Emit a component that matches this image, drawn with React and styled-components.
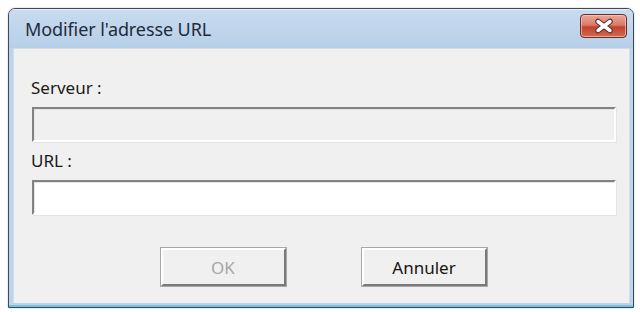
import React from "react";
import styled, { createGlobalStyle } from "styled-components";

const GlobalStyle = createGlobalStyle`
  html, body {
    margin: 0;
    padding: 0;
    background: #ffffff;
  }
  body {
    font-family: "Noto Sans", "Open Sans", sans-serif;
  }
`;

const Page = styled.div`
  width: 640px;
  height: 312px;
  padding: 8px 0 0 8px;
  box-sizing: border-box;
`;

const Window = styled.div`
  width: 626px;
  height: 300px;
  box-sizing: border-box;
  border: 1px solid #3c4a58;
  border-radius: 7px 7px 0 0;
  background: linear-gradient(#c3d7ec, #b9d1ea 40px);
  display: flex;
  flex-direction: column;
  overflow: hidden;
  box-shadow: 0 0 2px rgba(0, 0, 0, 0.25);
`;

const TitleBar = styled.div`
  height: 38px;
  flex: none;
  display: flex;
  align-items: center;
  justify-content: space-between;
  padding: 0 6px 0 16px;
  background: linear-gradient(#c8dbef, #b6cfe8);
  border-top: 1px solid #e8f0f8;
`;

const Title = styled.div`
  font-size: 18px;
  color: #1e2b3a;
  letter-spacing: -0.1px;
`;

const CloseButton = styled.div`
  align-self: flex-start;
  margin-top: 4px;
  width: 47px;
  height: 24px;
  box-sizing: border-box;
  border: 1px solid #6a2d24;
  border-radius: 4px;
  background: linear-gradient(#eaa896 0%, #da7b6c 45%, #c4412f 55%, #d26a4f 100%);
  box-shadow: inset 0 0 0 1px rgba(255, 210, 200, 0.6);
  display: flex;
  align-items: center;
  justify-content: center;
`;

const Frame = styled.div`
  flex: 1;
  display: flex;
  padding: 0 4px 4px 4px;
  background: #bcd3eb;
  box-shadow: inset 0 -2px 0 #6fc5e8;
`;

const Content = styled.div`
  flex: 1;
  background: #f0f0f0;
  border: 1px solid #d4dde6;
  border-bottom: none;
  padding: 29px 13px 0 17px;
  display: flex;
  flex-direction: column;
`;

const Label = styled.div`
  font-size: 17px;
  line-height: 20px;
  color: #1a1a1a;
  margin-top: ${(p) => p.$top || 0}px;
`;

const Field = styled.input`
  display: block;
  width: 584px;
  height: 35px;
  box-sizing: border-box;
  margin-top: 9px;
  margin-left: 1px;
  border: 2px solid;
  border-color: #828282 #ffffff #ffffff #828282;
  box-shadow: 1px 1px 0 #e3e3e3 inset, 1px 1px 0 #e4e4e4;
  background: ${(p) => (p.disabled ? "#f0f0f0" : "#ffffff")};
  outline: none;
  font: inherit;
`;

const ButtonRow = styled.div`
  display: flex;
  justify-content: center;
  gap: 76px;
  margin-top: 33px;
`;

const Button = styled.button`
  width: 125px;
  height: 38px;
  box-sizing: border-box;
  border: 2px solid;
  border-color: #ffffff #7a7a7a #7a7a7a #ffffff;
  box-shadow: 0 0 0 1px #a8a8a8;
  background: #f0f0f0;
  font-family: "Noto Sans", "Open Sans", sans-serif;
  font-size: 17px;
  color: ${(p) => (p.disabled ? "#a6a6a6" : "#141414")};
  padding: 0;
`;

const CloseIcon = () => (
  <svg width="24" height="16" viewBox="0 0 24 16">
    <path
      d="M6 3.5 L18 12.5 M18 3.5 L6 12.5"
      stroke="#5a2a24"
      strokeWidth="5.5"
      strokeLinecap="round"
    />
    <path
      d="M6 3.5 L18 12.5 M18 3.5 L6 12.5"
      stroke="#ffffff"
      strokeWidth="3.5"
      strokeLinecap="round"
    />
  </svg>
);

export default function App() {
  return (
    <Page>
      <GlobalStyle />
      <Window>
        <TitleBar>
          <Title>Modifier l'adresse URL</Title>
          <CloseButton>
            <CloseIcon />
          </CloseButton>
        </TitleBar>
        <Frame>
          <Content>
            <Label>Serveur :</Label>
            <Field disabled />
            <Label $top={9}>URL :</Label>
            <Field />
            <ButtonRow>
              <Button disabled>OK</Button>
              <Button>Annuler</Button>
            </ButtonRow>
          </Content>
        </Frame>
      </Window>
    </Page>
  );
}
